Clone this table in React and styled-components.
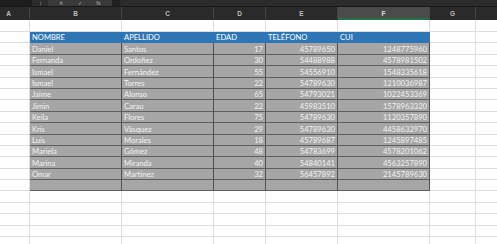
import React from 'react';
import styled, { createGlobalStyle } from 'styled-components';

const GlobalStyle = createGlobalStyle`
  html, body {
    margin: 0;
    padding: 0;
    background: #ffffff;
  }
  body {
    font-family: Lato, "Liberation Sans", Arial, sans-serif;
    overflow: hidden;
  }
  * { box-sizing: border-box; }
`

const COLS = '42px 92px 92px 52px 72px 92px 46px 46px';

const Window = styled.div`
  width: 497px;
  height: 244px;
  overflow: hidden;
  background: #ffffff;
`

const FormulaStrip = styled.div`
  display: flex;
  height: 7px;
  background: #1f1f1f;
  border-bottom: 1px solid #171717;
`

const StripPart = styled.div`
  width: ${p => p.$w}px;
  flex: ${p => (p.$grow ? 1 : 'none')};
  background: ${p => p.$bg};
  display: flex;
  align-items: flex-end;
  justify-content: space-around;
  overflow: hidden;
  color: #9a9a9a;
  font-size: 5px;
  line-height: 6px;
  padding: 0 4px;
`

const Glyph = styled.span`
  font-weight: bold;
`

const Sheet = styled.div`
  margin-left: -12px;
`

const Row = styled.div`
  display: grid;
  grid-template-columns: ${COLS};
  height: ${p => p.$h}px;
`

const ColHead = styled.div`
  background: ${p => (p.$active ? '#4b4b4b' : '#2a2a2a')};
  border-right: 1px solid #444444;
  border-bottom: 2px solid ${p => (p.$active ? '#217346' : '#2a2a2a')};
  color: ${p => (p.$active ? '#e0e0e0' : '#bdbdbd')};
  font-family: "Liberation Sans", Arial, sans-serif;
  font-size: 6.5px;
  font-weight: bold;
  display: flex;
  align-items: center;
  justify-content: center;
  padding-top: 2px;
`

const Cell = styled.div`
  border-right: 1px solid ${p => p.$line};
  border-bottom: 1px solid ${p => p.$lineB || p.$line};
  background: ${p => p.$bg};
  color: ${p => p.$color};
  font-size: 7.6px;
  line-height: 10px;
  padding: 0 2px;
  white-space: nowrap;
  overflow: hidden;
  display: flex;
  align-items: flex-end;
  justify-content: ${p => (p.$right ? 'flex-end' : 'flex-start')};
`

const EmptyCell = (props) => <Cell $line="#dedede" $bg="#ffffff" $color="#000" {...props} />
const HeadCell = (props) => <Cell $line="#2e75b6" $lineB="#2e75b6" $bg="#2e75b6" $color="#ffffff" {...props} />
const DataCell = (props) => <Cell $line="#4e4e4e" $lineB="#5e5e5e" $bg="#a6a6a6" $color="#f2f2f2" {...props} />

// the last column's letter lies past the right edge of the view
const letters = ['A', 'B', 'C', 'D', 'E', 'F', 'G', ''];

const people = [
  ['Daniel', 'Santos', 17, 45789650, 1248775960],
  ['Fernanda', 'Ordoñez', 30, 54488988, 4578981502],
  ['Ismael', 'Fernández', 55, 54556910, 1548335618],
  ['Ismael', 'Torres', 22, 54789630, 1210036987],
  ['Jaime', 'Alonso', 65, 54793021, 1022453369],
  ['Jimin', 'Carau', 22, 45983510, 1578963320],
  ['Keila', 'Flores', 75, 54789630, 1120357890],
  ['Kris', 'Vásquez', 29, 54789630, 4458632970],
  ['Luis', 'Morales', 18, 45789687, 1245897485],
  ['Mariela', 'Gómez', 48, 54783699, 4578201062],
  ['Marina', 'Miranda', 40, 54840141, 4563257890],
  ['Omar', 'Martinez', 32, 56457892, 2145789630],
];

const headers = ['NOMBRE', 'APELLIDO', 'EDAD', 'TELÉFONO', 'CUI'];

function Trailing() {
  return (
    <>
      <EmptyCell />
      <EmptyCell />
    </>
  )
}

function App() {
  const ROW = 11.4;

  return (
    <Window>
      <GlobalStyle />
      <FormulaStrip>
        <StripPart $w={32} $bg="#1d1d1d" />
        <StripPart $w={16} $bg="#2c2c2c"><Glyph>⁝</Glyph></StripPart>
        <StripPart $w={64} $bg="#393939">
          <Glyph>✕</Glyph><Glyph>✓</Glyph><Glyph>fx</Glyph>
        </StripPart>
        <StripPart $w={6} $bg="#1f1f1f" />
        <StripPart $grow $bg="#2b2b2b" />
      </FormulaStrip>
      <Sheet>
        <Row $h={13}>
          {letters.map((l, i) => <ColHead key={i} $active={l === 'F'}>{l}</ColHead>)}
        </Row>
        <Row $h={12}>
          {letters.map((l, i) => <EmptyCell key={i} />)}
        </Row>
        <Row $h={ROW}>
          <EmptyCell />
          {headers.map(h => <HeadCell key={h}>{h}</HeadCell>)}
          <Trailing />
        </Row>
        {people.map((p, i) => (
          <Row $h={ROW} key={i}>
            <EmptyCell />
            <DataCell>{p[0]}</DataCell>
            <DataCell>{p[1]}</DataCell>
            <DataCell $right>{p[2]}</DataCell>
            <DataCell $right>{p[3]}</DataCell>
            <DataCell $right>{p[4]}</DataCell>
            <Trailing />
          </Row>
        ))}
        <Row $h={ROW}>
          <EmptyCell />
          {[0, 1, 2, 3, 4].map(i => <DataCell key={i} />)}
          <Trailing />
        </Row>
        {[0, 1, 2, 3, 4].map(r => (
          <Row $h={ROW} key={'e' + r}>
            {letters.map((l, i) => <EmptyCell key={i} />)}
          </Row>
        ))}
      </Sheet>
    </Window>
  )
}

export default App
